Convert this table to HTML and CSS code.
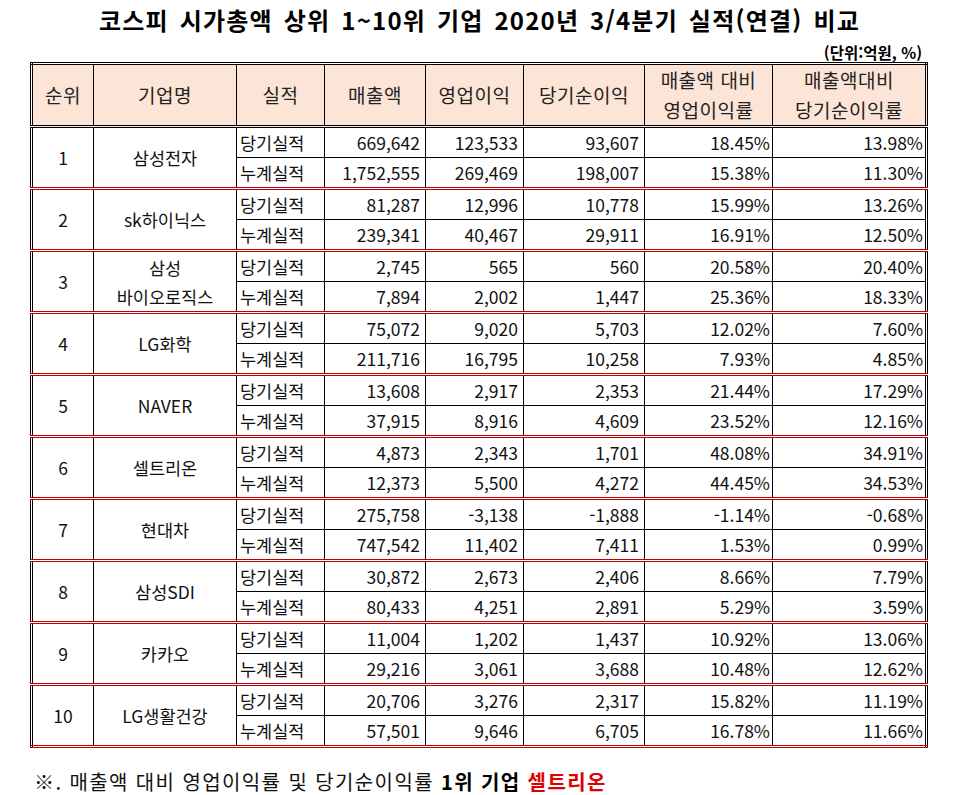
FILE: index.html
```html
<!DOCTYPE html>
<html lang="ko">
<head>
<meta charset="utf-8">
<link rel="stylesheet" href="styles.css">
</head>
<body>
<div class="page">
  <h1 class="title">코스피 시가총액 상위 1~10위 기업 2020년 3/4분기 실적(연결) 비교</h1>
  <div class="unit">(단위:억원, %)</div>
  <table class="tbl">
    <colgroup>
      <col class="c1"><col class="c2"><col class="c3"><col class="c4"><col class="c5"><col class="c6"><col class="c7"><col class="c8">
    </colgroup>
    <thead>
      <tr>
        <th>순위</th><th>기업명</th><th>실적</th><th>매출액</th><th>영업이익</th><th>당기순이익</th><th>매출액 대비<br>영업이익률</th><th>매출액대비<br>당기순이익률</th>
      </tr>
    </thead>
    <tbody>
      <tr class="first"><td rowspan="2" class="ctr">1</td><td rowspan="2" class="ctr">삼성전자</td><td class="kind">당기실적</td><td class="num">669,642</td><td class="num">123,533</td><td class="num">93,607</td><td class="pct">18.45%</td><td class="pct">13.98%</td></tr>
      <tr><td class="kind">누계실적</td><td class="num">1,752,555</td><td class="num">269,469</td><td class="num">198,007</td><td class="pct">15.38%</td><td class="pct">11.30%</td></tr>
    </tbody>
    <tbody>
      <tr class="first"><td rowspan="2" class="ctr">2</td><td rowspan="2" class="ctr">sk하이닉스</td><td class="kind">당기실적</td><td class="num">81,287</td><td class="num">12,996</td><td class="num">10,778</td><td class="pct">15.99%</td><td class="pct">13.26%</td></tr>
      <tr><td class="kind">누계실적</td><td class="num">239,341</td><td class="num">40,467</td><td class="num">29,911</td><td class="pct">16.91%</td><td class="pct">12.50%</td></tr>
    </tbody>
    <tbody>
      <tr class="first"><td rowspan="2" class="ctr">3</td><td rowspan="2" class="ctr two">삼성<br>바이오로직스</td><td class="kind">당기실적</td><td class="num">2,745</td><td class="num">565</td><td class="num">560</td><td class="pct">20.58%</td><td class="pct">20.40%</td></tr>
      <tr><td class="kind">누계실적</td><td class="num">7,894</td><td class="num">2,002</td><td class="num">1,447</td><td class="pct">25.36%</td><td class="pct">18.33%</td></tr>
    </tbody>
    <tbody>
      <tr class="first"><td rowspan="2" class="ctr">4</td><td rowspan="2" class="ctr">LG화학</td><td class="kind">당기실적</td><td class="num">75,072</td><td class="num">9,020</td><td class="num">5,703</td><td class="pct">12.02%</td><td class="pct">7.60%</td></tr>
      <tr><td class="kind">누계실적</td><td class="num">211,716</td><td class="num">16,795</td><td class="num">10,258</td><td class="pct">7.93%</td><td class="pct">4.85%</td></tr>
    </tbody>
    <tbody>
      <tr class="first"><td rowspan="2" class="ctr">5</td><td rowspan="2" class="ctr">NAVER</td><td class="kind">당기실적</td><td class="num">13,608</td><td class="num">2,917</td><td class="num">2,353</td><td class="pct">21.44%</td><td class="pct">17.29%</td></tr>
      <tr><td class="kind">누계실적</td><td class="num">37,915</td><td class="num">8,916</td><td class="num">4,609</td><td class="pct">23.52%</td><td class="pct">12.16%</td></tr>
    </tbody>
    <tbody>
      <tr class="first"><td rowspan="2" class="ctr">6</td><td rowspan="2" class="ctr">셀트리온</td><td class="kind">당기실적</td><td class="num">4,873</td><td class="num">2,343</td><td class="num">1,701</td><td class="pct">48.08%</td><td class="pct">34.91%</td></tr>
      <tr><td class="kind">누계실적</td><td class="num">12,373</td><td class="num">5,500</td><td class="num">4,272</td><td class="pct">44.45%</td><td class="pct">34.53%</td></tr>
    </tbody>
    <tbody>
      <tr class="first"><td rowspan="2" class="ctr">7</td><td rowspan="2" class="ctr">현대차</td><td class="kind">당기실적</td><td class="num">275,758</td><td class="num">-3,138</td><td class="num">-1,888</td><td class="pct">-1.14%</td><td class="pct">-0.68%</td></tr>
      <tr><td class="kind">누계실적</td><td class="num">747,542</td><td class="num">11,402</td><td class="num">7,411</td><td class="pct">1.53%</td><td class="pct">0.99%</td></tr>
    </tbody>
    <tbody>
      <tr class="first"><td rowspan="2" class="ctr">8</td><td rowspan="2" class="ctr">삼성SDI</td><td class="kind">당기실적</td><td class="num">30,872</td><td class="num">2,673</td><td class="num">2,406</td><td class="pct">8.66%</td><td class="pct">7.79%</td></tr>
      <tr><td class="kind">누계실적</td><td class="num">80,433</td><td class="num">4,251</td><td class="num">2,891</td><td class="pct">5.29%</td><td class="pct">3.59%</td></tr>
    </tbody>
    <tbody>
      <tr class="first"><td rowspan="2" class="ctr">9</td><td rowspan="2" class="ctr">카카오</td><td class="kind">당기실적</td><td class="num">11,004</td><td class="num">1,202</td><td class="num">1,437</td><td class="pct">10.92%</td><td class="pct">13.06%</td></tr>
      <tr><td class="kind">누계실적</td><td class="num">29,216</td><td class="num">3,061</td><td class="num">3,688</td><td class="pct">10.48%</td><td class="pct">12.62%</td></tr>
    </tbody>
    <tbody class="last">
      <tr class="first"><td rowspan="2" class="ctr">10</td><td rowspan="2" class="ctr">LG생활건강</td><td class="kind">당기실적</td><td class="num">20,706</td><td class="num">3,276</td><td class="num">2,317</td><td class="pct">15.82%</td><td class="pct">11.19%</td></tr>
      <tr><td class="kind">누계실적</td><td class="num">57,501</td><td class="num">9,646</td><td class="num">6,705</td><td class="pct">16.78%</td><td class="pct">11.66%</td></tr>
    </tbody>
  </table>
  <p class="note">※. 매출액 대비 영업이익률 및 당기순이익률 <b>1위 기업</b> <b class="red">셀트리온</b></p>
</div>
</body>
</html>
```

FILE: styles.css
```css
html, body {
  margin: 0;
  padding: 0;
  background: #ffffff;
}
body {
  font-family: "Noto Sans CJK KR", "Noto Sans", sans-serif;
  color: #111;
}
.page {
  width: 959px;
  padding-top: 5px;
}
.title {
  margin: 0;
  font-size: 24px;
  line-height: 30px;
  font-weight: 700;
  text-align: center;
  color: #000;
  letter-spacing: 1.2px;
  word-spacing: 3px;
}
.unit {
  margin: 8px 37px 0 0;
  text-align: right;
  font-size: 15.5px;
  line-height: 18px;
  font-weight: 700;
  color: #000;
}
.tbl {
  margin: 1px 0 0 30px;
  border-collapse: collapse;
  table-layout: fixed;
  width: 895px;
  border: 3px double #000;
  border-bottom: 3px double #c00000;
  font-size: 17.5px;
}
.c1 { width: 62px; }
.c2 { width: 143px; }
.c3 { width: 88px; }
.c4 { width: 101px; }
.c5 { width: 98px; }
.c6 { width: 121px; }
.c7 { width: 128px; }
.c8 { width: 154px; }
.tbl th {
  background: #fce4d6;
  font-weight: 400;
  font-size: 19px;
  letter-spacing: 0.5px;
  color: #222;
  height: 59px;
  padding: 0;
  line-height: 30px;
  border: 1px solid #000;
  border-bottom: 3px double #000;
  vertical-align: middle;
}
.tbl td {
  height: 29px;
  padding: 0;
  line-height: 29px;
  border: 1px solid #000;
  vertical-align: middle;
  white-space: nowrap;
}
.tbl tr.first td {
  border-top: 3px double #c00000;
}
.tbl thead + tbody tr.first td {
  border-top: 3px double #000;
}
.ctr { text-align: center; }
.two { line-height: 30px; }
.kind { text-align: left; padding-left: 3px !important; }
.num { text-align: right; padding-right: 5px !important; }
.pct { text-align: right; padding-right: 2px !important; }
.note {
  margin: 20px 0 0 34px;
  font-size: 20px;
  line-height: 28px;
  letter-spacing: 1.4px;
  color: #111;
}
.note b { font-weight: 700; color: #000; }
.note .red { color: #e00000; }
```
